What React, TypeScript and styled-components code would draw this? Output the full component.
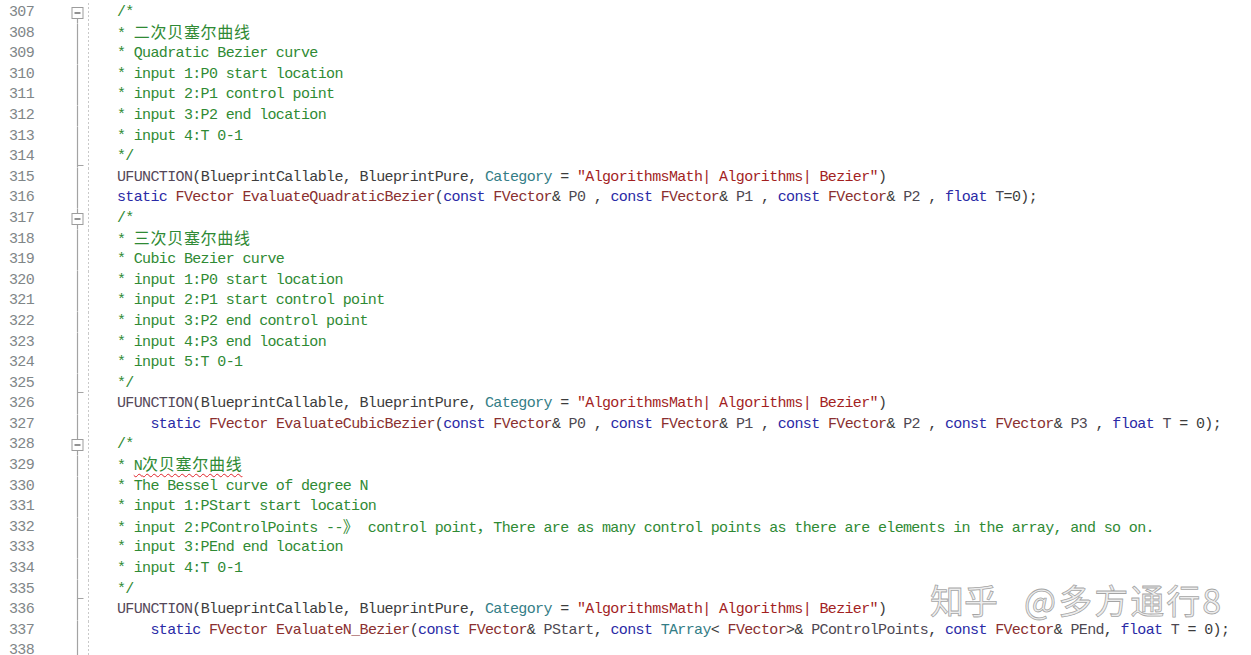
import React from "react";
import styled, { createGlobalStyle } from "styled-components";

type Kind = "c" | "w" | "k" | "t" | "f" | "s" | "m" | "p" | "v" | "q";
type Token = [Kind, string];
type Fold = "box" | "boxLine" | "line" | "tick";
interface Line {
  n: number;
  fold: Fold;
  tokens: Token[];
}

const GlobalStyle = createGlobalStyle`
  html, body {
    margin: 0;
    padding: 0;
    background: #ffffff;
    overflow: hidden;
  }
`;

const colors: Record<Kind, string> = {
  c: "#2f8a34",
  w: "#2f8a34",
  k: "#2a2aa6",
  t: "#8a2f2f",
  f: "#8a2f2f",
  s: "#a31f1f",
  m: "#55485a",
  p: "#3c3c3c",
  v: "#4e4852",
  q: "#347d86",
};

const Editor = styled.div`
  position: relative;
  width: 1251px;
  height: 655px;
  overflow: hidden;
  padding-top: 3px;
  box-sizing: border-box;
  font-family: "Liberation Mono", "DejaVu Sans Mono", monospace;
  font-size: 15px;
  letter-spacing: -0.64px;
`;

const Row = styled.div`
  display: flex;
  align-items: stretch;
  height: 20.6px;
  line-height: 20.6px;
`;

const LineNo = styled.div`
  width: 34px;
  flex: none;
  text-align: right;
  color: #7f8688;
`;

const FoldCell = styled.div`
  width: 20px;
  flex: none;
  margin-left: 34px;
  display: flex;
`;

const Code = styled.div`
  flex: 1;
  padding-left: 29px;
  white-space: pre;
  background-image: repeating-linear-gradient(
    to bottom,
    #c9c9c9 0,
    #c9c9c9 2px,
    transparent 2px,
    transparent 4px
  );
  background-size: 1px 100%;
  background-repeat: no-repeat;
  background-position: left top;
`;

const Tok = styled.span<{ $kind: Kind }>`
  color: ${(p) => colors[p.$kind]};
  ${(p) =>
    p.$kind === "w"
      ? `text-decoration: underline wavy #e0242a; text-decoration-thickness: 1px; text-underline-offset: 3px; text-decoration-skip-ink: none;`
      : ""}
`;

const Cjk = styled.span`
  font-family: "Noto Sans CJK SC", sans-serif;
  font-size: 16px;
  line-height: 14px;
  letter-spacing: 0.72px;
`;

const Watermark = styled.div`
  position: absolute;
  left: 930px;
  top: 583px;
  display: flex;
  gap: 26px;
  font-family: "Noto Sans CJK SC", sans-serif;
  font-size: 34px;
  line-height: 34px;
  color: rgba(236, 236, 236, 0.95);
  -webkit-text-stroke: 0.8px rgba(150, 150, 150, 0.85);
  pointer-events: none;
`;

const WmPart = styled.span<{ $spread?: boolean }>`
  letter-spacing: ${(p) => (p.$spread ? "2px" : "0px")};
`;

const FoldIcon: React.FC<{ kind: Fold }> = ({ kind }) => {
  const h = 20.6;
  const x = 9.5;
  return (
    <svg width="20" height={h} viewBox={`0 0 20 ${h}`}>
      {kind === "box" && <line x1={x} y1={15.5} x2={x} y2={h} stroke="#a3a3a3" strokeWidth="1.2" />}
      {kind === "boxLine" && (
        <>
          <line x1={x} y1={0} x2={x} y2={4.5} stroke="#a3a3a3" strokeWidth="1.2" />
          <line x1={x} y1={15.5} x2={x} y2={h} stroke="#a3a3a3" strokeWidth="1.2" />
        </>
      )}
      {(kind === "line" || kind === "tick") && (
        <line x1={x} y1={0} x2={x} y2={h} stroke="#a3a3a3" strokeWidth="1.2" />
      )}
      {kind === "tick" && <line x1={x} y1={18.5} x2={15.5} y2={18.5} stroke="#a3a3a3" strokeWidth="1" />}
      {(kind === "box" || kind === "boxLine") && (
        <>
          <rect x={4} y={4.5} width={11} height={11} fill="#ffffff" stroke="#9c9c9c" strokeWidth="1" />
          <line x1={6.5} y1={10} x2={12.5} y2={10} stroke="#4a4a4a" strokeWidth="1.2" />
        </>
      )}
    </svg>
  );
};

const cjkRe = /([\u3000-\u303f\u3400-\u9fff\uff00-\uffef]+)/;

const renderText = (text: string) =>
  text.split(cjkRe).map((part, i) =>
    part === "" ? null : cjkRe.test(part) ? <Cjk key={i}>{part}</Cjk> : <React.Fragment key={i}>{part}</React.Fragment>
  );

const ufn: Token[] = [
  ["m", "UFUNCTION"],
  ["p", "(BlueprintCallable, BlueprintPure, "],
  ["q", "Category"],
  ["p", " = "],
  ["s", '"AlgorithmsMath| Algorithms| Bezier"'],
  ["p", ")"],
];

const cfv = (name: string, sep: string): Token[] => [
  ["k", "const"],
  ["p", " "],
  ["t", "FVector"],
  ["p", "& "],
  ["v", name],
  ["p", sep],
];

const head = (indent: string, fn: string): Token[] => [
  ["p", indent],
  ["k", "static"],
  ["p", " "],
  ["t", "FVector"],
  ["p", " "],
  ["f", fn],
  ["p", "("],
];

const c = (t: string): Token[] => [["c", t]];

const lines: Line[] = [
  { n: 307, fold: "box", tokens: c("/*") },
  { n: 308, fold: "line", tokens: c("* 二次贝塞尔曲线") },
  { n: 309, fold: "line", tokens: c("* Quadratic Bezier curve") },
  { n: 310, fold: "line", tokens: c("* input 1:P0 start location") },
  { n: 311, fold: "line", tokens: c("* input 2:P1 control point") },
  { n: 312, fold: "line", tokens: c("* input 3:P2 end location") },
  { n: 313, fold: "line", tokens: c("* input 4:T 0-1") },
  { n: 314, fold: "tick", tokens: c("*/") },
  { n: 315, fold: "line", tokens: ufn },
  {
    n: 316,
    fold: "line",
    tokens: [
      ...head("", "EvaluateQuadraticBezier"),
      ...cfv("P0", " , "),
      ...cfv("P1", " , "),
      ...cfv("P2", " , "),
      ["k", "float"],
      ["p", " "],
      ["v", "T"],
      ["p", "=0);"],
    ],
  },
  { n: 317, fold: "boxLine", tokens: c("/*") },
  { n: 318, fold: "line", tokens: c("* 三次贝塞尔曲线") },
  { n: 319, fold: "line", tokens: c("* Cubic Bezier curve") },
  { n: 320, fold: "line", tokens: c("* input 1:P0 start location") },
  { n: 321, fold: "line", tokens: c("* input 2:P1 start control point") },
  { n: 322, fold: "line", tokens: c("* input 3:P2 end control point") },
  { n: 323, fold: "line", tokens: c("* input 4:P3 end location") },
  { n: 324, fold: "line", tokens: c("* input 5:T 0-1") },
  { n: 325, fold: "tick", tokens: c("*/") },
  { n: 326, fold: "line", tokens: ufn },
  {
    n: 327,
    fold: "line",
    tokens: [
      ...head("    ", "EvaluateCubicBezier"),
      ...cfv("P0", " , "),
      ...cfv("P1", " , "),
      ...cfv("P2", " , "),
      ...cfv("P3", " , "),
      ["k", "float"],
      ["p", " "],
      ["v", "T"],
      ["p", " = 0);"],
    ],
  },
  { n: 328, fold: "boxLine", tokens: c("/*") },
  { n: 329, fold: "line", tokens: [["c", "* "], ["w", "N次贝塞尔曲线"]] },
  { n: 330, fold: "line", tokens: c("* The Bessel curve of degree N") },
  { n: 331, fold: "line", tokens: c("* input 1:PStart start location") },
  {
    n: 332,
    fold: "line",
    tokens: c(
      "* input 2:PControlPoints --》 control point，There are as many control points as there are elements in the array, and so on."
    ),
  },
  { n: 333, fold: "line", tokens: c("* input 3:PEnd end location") },
  { n: 334, fold: "line", tokens: c("* input 4:T 0-1") },
  { n: 335, fold: "tick", tokens: c("*/") },
  { n: 336, fold: "line", tokens: ufn },
  {
    n: 337,
    fold: "line",
    tokens: [
      ...head("    ", "EvaluateN_Bezier"),
      ...cfv("PStart", ", "),
      ["k", "const"],
      ["p", " "],
      ["q", "TArray"],
      ["p", "< "],
      ["t", "FVector"],
      ["p", ">& "],
      ["v", "PControlPoints"],
      ["p", ", "],
      ...cfv("PEnd", ", "),
      ["k", "float"],
      ["p", " "],
      ["v", "T"],
      ["p", " = 0);"],
    ],
  },
  { n: 338, fold: "line", tokens: [] },
];

export default function App() {
  return (
    <>
      <GlobalStyle />
      <Editor>
        {lines.map((line) => (
          <Row key={line.n}>
            <LineNo>{line.n}</LineNo>
            <FoldCell>
              <FoldIcon kind={line.fold} />
            </FoldCell>
            <Code>
              {line.tokens.map(([kind, text], i) => (
                <Tok key={i} $kind={kind}>
                  {renderText(text)}
                </Tok>
              ))}
            </Code>
          </Row>
        ))}
        <Watermark>
          <WmPart>知乎</WmPart>
          <WmPart $spread>@多方通行8</WmPart>
        </Watermark>
      </Editor>
    </>
  );
}
